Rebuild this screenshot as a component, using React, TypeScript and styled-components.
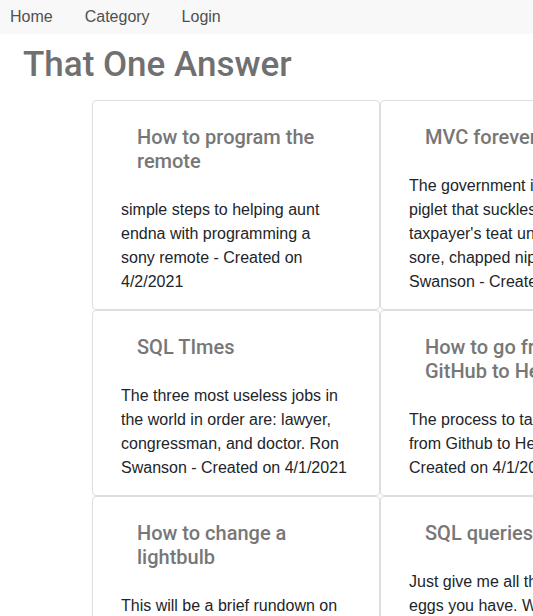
import React, { FC } from 'react'
import styled, { createGlobalStyle } from 'styled-components'

const GlobalStyle = createGlobalStyle`
  html, body {
    margin: 0;
    padding: 0;
    overflow: hidden;
    background: #fff;
    font-family: 'Liberation Sans', Arial, Helvetica, sans-serif;
  }
`

const NavBar = styled.nav`
  display: flex;
  align-items: center;
  gap: 32px;
  height: 34px;
  padding-left: 10px;
  background: #f8f8f8;
`

const NavLink = styled.a`
  font-size: 16px;
  color: #505050;
  text-decoration: none;
  cursor: pointer;
`

const PageTitle = styled.h1`
  margin: 10px 0 14px 23px;
  font-family: Roboto, 'Liberation Sans', Arial, sans-serif;
  font-size: 35px;
  line-height: 42px;
  font-weight: 500;
  color: #707070;
  white-space: nowrap;
`

const CardGrid = styled.div`
  display: grid;
  grid-template-columns: repeat(2, 288px);
  margin-left: 92px;
`

const Card = styled.div`
  border: 1px solid #dedede;
  border-radius: 4px;
  padding: 24px 31.5px 15px 28px;
  background: #fff;
`

const CardTitle = styled.h5`
  margin: 0 16px 25px;
  font-family: Roboto, 'Liberation Sans', Arial, sans-serif;
  font-size: 20px;
  line-height: 24px;
  font-weight: 500;
  color: #777;
`

const CardText = styled.p`
  margin: 0;
  font-size: 16px;
  line-height: 24px;
  color: #212529;
`

type Answer = { title: string; body: string }

const answers: Answer[] = [
  {
    title: 'How to program the remote',
    body: 'simple steps to helping aunt endna with programming a sony remote - Created on 4/2/2021',
  },
  {
    title: 'MVC forever',
    body: "The government is a greedy piglet that suckles on a taxpayer's teat until they have sore, chapped nipples. Ron Swanson - Created on 4/1/2021",
  },
  {
    title: 'SQL TImes',
    body: 'The three most useless jobs in the world in order are: lawyer, congressman, and doctor. Ron Swanson - Created on 4/1/2021',
  },
  {
    title: 'How to go from GitHub to Heroku',
    body: 'The process to take an app from Github to Heroku. - Created on 4/1/2021',
  },
  {
    title: 'How to change a lightbulb',
    body: 'This will be a brief rundown on how to change a lightbulb without calling anyone - Created on 4/1/2021',
  },
  {
    title: 'SQL queries',
    body: 'Just give me all the bacon and eggs you have. Wait... wait. I worry what you just heard was: Give me a lot of bacon and eggs. - Created on 4/1/2021',
  },
]

const App: FC = () => {
  return (
    <>
      <GlobalStyle />
      <NavBar>
        <NavLink>Home</NavLink>
        <NavLink>Category</NavLink>
        <NavLink>Login</NavLink>
      </NavBar>
      <PageTitle>That One Answer</PageTitle>
      <CardGrid>
        {answers.map((a) => (
          <Card key={a.title}>
            <CardTitle>{a.title}</CardTitle>
            <CardText>{a.body}</CardText>
          </Card>
        ))}
      </CardGrid>
    </>
  )
}

export default App
